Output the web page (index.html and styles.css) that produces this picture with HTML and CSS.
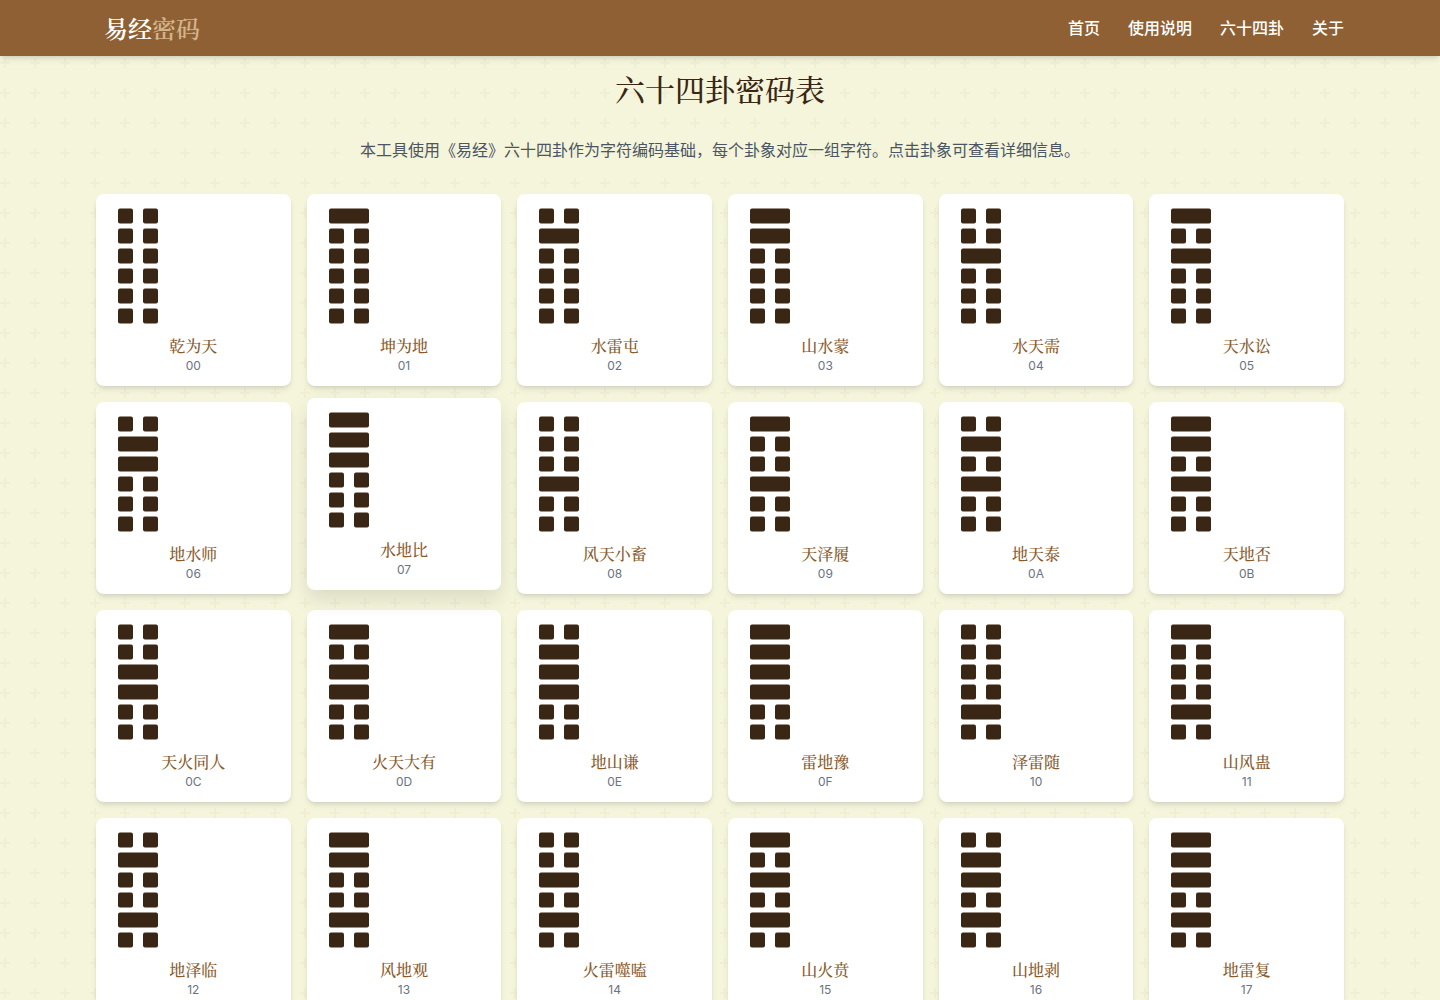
FILE: index.html
```
<!DOCTYPE html>
<html lang="zh-CN">
<head>
  <meta charset="UTF-8">
  <meta name="viewport" content="width=device-width, initial-scale=1.0">
  <title>易经密码</title>
  <link rel="stylesheet" href="styles.css">
</head>
<body>
  <header class="header">
    <div class="container header-inner">
      <a class="logo" href="#">易经<span class="logo-accent">密码</span></a>
      <nav class="nav">
        <a href="#">首页</a>
        <a href="#guide">使用说明</a>
        <a href="#hexagrams">六十四卦</a>
        <a href="#about">关于</a>
      </nav>
    </div>
  </header>

  <main class="container main" id="hexagrams">
    <h1 class="title">六十四卦密码表</h1>
    <p class="intro">本工具使用《易经》六十四卦作为字符编码基础，每个卦象对应一组字符。点击卦象可查看详细信息。</p>
    <div class="grid" id="grid"></div>
  </main>

  <script src="script.js"></script>
</body>
</html>
```

FILE: styles.css
```
* {
  box-sizing: border-box;
}

body {
  margin: 0;
  color: #3a2614;
  font-family: Inter, "Noto Sans CJK SC", sans-serif;
  font-size: 16px;
  line-height: 24px;
  background-color: #f5f5dc;
  background-image: url("data:image/svg+xml,%3Csvg width='60' height='60' viewBox='0 0 60 60' xmlns='http://www.w3.org/2000/svg'%3E%3Cpath d='M36 34v-4h-2v4h-4v2h4v4h2v-4h4v-2h-4zm0-30V0h-2v4h-4v2h4v4h2V6h4V4h-4zM6 34v-4H4v4H0v2h4v4h2v-4h4v-2H6zM6 4V0H4v4H0v2h4v4h2V6h4V4H6z' fill='%238b5a2b' fill-opacity='0.05'/%3E%3C/svg%3E");
  background-position: 0 -2px;
}

.container {
  max-width: 1280px;
  margin: 0 auto;
  padding: 0 16px;
}

.header {
  position: sticky;
  top: 0;
  z-index: 10;
  background: #8f6033;
  box-shadow: 0 4px 6px -1px rgba(0, 0, 0, 0.1), 0 2px 4px -2px rgba(0, 0, 0, 0.1);
}

.header-inner {
  display: flex;
  align-items: center;
  justify-content: space-between;
  padding-top: 12px;
  padding-bottom: 12px;
}

.logo,
.title,
.name {
  font-family: "Noto Serif CJK SC", "Noto Serif SC", "Noto Sans CJK SC", serif;
}

.logo {
  padding-left: 8px;
  color: #fff;
  font-size: 24px;
  font-weight: 600;
  line-height: 32px;
  text-decoration: none;
}

.logo-accent {
  color: #d2b48c;
}

.nav {
  display: flex;
  gap: 28px;
}

.nav a {
  color: #fff;
  font-weight: 500;
  text-decoration: none;
}

.main {
  padding-top: 16px;
  padding-bottom: 32px;
}

.title {
  margin: 0 0 34px;
  font-size: 30px;
  font-weight: 500;
  line-height: 32px;
  text-align: center;
}

.intro {
  margin: 0 0 32px;
  color: #4b5563;
  text-align: center;
}

.grid {
  display: grid;
  grid-template-columns: repeat(6, 1fr);
  gap: 16px;
}

.card {
  display: flex;
  flex-direction: column;
  align-items: center;
  padding: 12px;
  border: 0;
  border-radius: 8px;
  background: #fff;
  font-family: inherit;
  cursor: pointer;
  box-shadow: 0 4px 6px -1px rgba(0, 0, 0, 0.1), 0 2px 4px -2px rgba(0, 0, 0, 0.1);
  transition: transform 0.3s, box-shadow 0.3s;
}

.card:hover,
.card.active {
  transform: translateY(-4px);
  box-shadow: 0 10px 20px rgba(0, 0, 0, 0.1);
}

.lines {
  align-self: flex-start;
  width: 60px;
  height: 120px;
  margin-bottom: 8px;
  fill: #3a2614;
}

.name {
  color: #8b5a2b;
  font-size: 16px;
  font-weight: 500;
  line-height: 24px;
}

.code {
  color: #6b7280;
  font-size: 12px;
  line-height: 16px;
}

@media (max-width: 900px) {
  .grid {
    grid-template-columns: repeat(3, 1fr);
  }
}
```

FILE: script.js
```
const names = [
  "乾为天", "坤为地", "水雷屯", "山水蒙", "水天需", "天水讼",
  "地水师", "水地比", "风天小畜", "天泽履", "地天泰", "天地否",
  "天火同人", "火天大有", "地山谦", "雷地豫", "泽雷随", "山风蛊",
  "地泽临", "风地观", "火雷噬嗑", "山火贲", "山地剥", "地雷复"
]
const activeIndex = 7

// lowest bit is the top line: 1 = solid, 0 = broken
function drawLines(n) {
  let rects = ""
  for (let i = 0; i < 6; i++) {
    const y = 2.5 + i * 20
    if ((n >> i) & 1) {
      rects += `<rect x="10" y="${y}" width="40" height="15" rx="2"/>`
    } else {
      rects += `<rect x="10" y="${y}" width="15" height="15" rx="2"/>`
      rects += `<rect x="35" y="${y}" width="15" height="15" rx="2"/>`
    }
  }
  return `<svg class="lines" viewBox="0 0 60 120" aria-hidden="true">${rects}</svg>`
}

const grid = document.getElementById("grid")
names.forEach((name, i) => {
  const card = document.createElement("button")
  card.type = "button"
  card.className = i === activeIndex ? "card active" : "card"
  const code = i.toString(16).toUpperCase().padStart(2, "0")
  card.innerHTML = `${drawLines(i)}<span class="name">${name}</span><span class="code">${code}</span>`
  grid.appendChild(card)
})
```
